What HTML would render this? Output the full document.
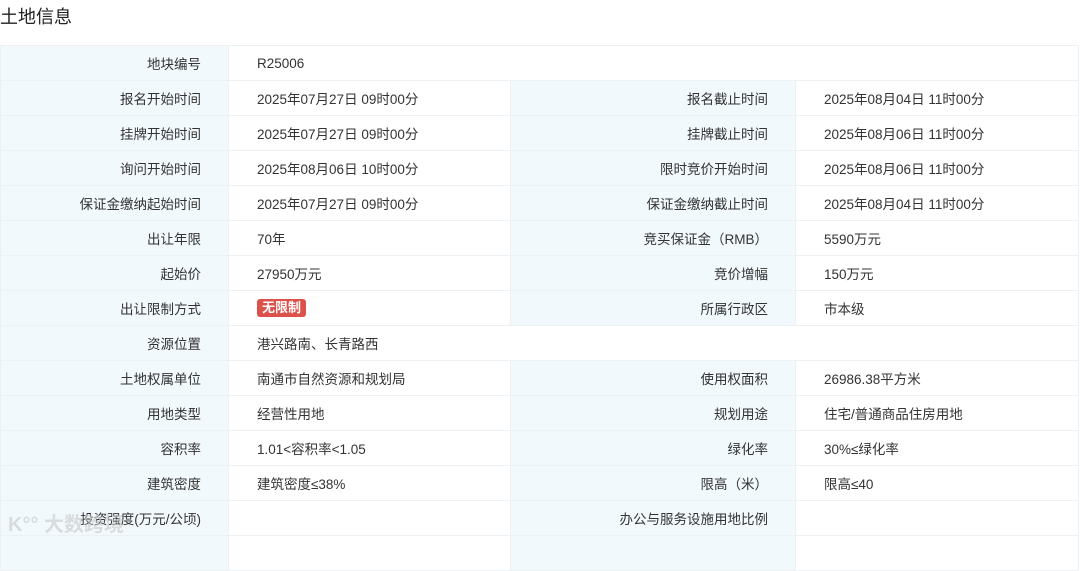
<!DOCTYPE html>
<html><head><meta charset="utf-8"><style>
body{margin:0;background:#fff;font-family:"Liberation Sans","Noto Sans CJK SC",sans-serif;color:#333;width:1080px;height:541px;overflow:hidden;position:relative}
h1{position:absolute;left:0;top:3px;margin:0;font-size:18px;font-weight:normal;color:#222}
table{position:absolute;left:0;top:45px;border-collapse:collapse;width:1078px;table-layout:fixed;font-size:13.5px}
td{height:34px;border:1px solid #edf1f4;padding:0;white-space:nowrap}
td.l{background:#f2f9fd;text-align:right;padding-right:27px;color:#333}
td.v{padding-left:28px}
.b{display:inline-block;background:#dc5149;color:#fff;font-weight:bold;font-size:13px;padding:0 5px;line-height:18px;border-radius:3px}
.wm{position:absolute;left:8px;top:508px;color:rgba(200,200,200,.6);font-size:20px;font-weight:bold}
</style></head><body>
<h1>土地信息</h1>
<table>
<colgroup><col style="width:228px"><col style="width:282px"><col style="width:285px"><col style="width:283px"></colgroup>
<tr><td class="l">地块编号</td><td class="v" colspan="3">R25006</td></tr>
<tr><td class="l">报名开始时间</td><td class="v">2025年07月27日 09时00分</td><td class="l">报名截止时间</td><td class="v">2025年08月04日 11时00分</td></tr>
<tr><td class="l">挂牌开始时间</td><td class="v">2025年07月27日 09时00分</td><td class="l">挂牌截止时间</td><td class="v">2025年08月06日 11时00分</td></tr>
<tr><td class="l">询问开始时间</td><td class="v">2025年08月06日 10时00分</td><td class="l">限时竞价开始时间</td><td class="v">2025年08月06日 11时00分</td></tr>
<tr><td class="l">保证金缴纳起始时间</td><td class="v">2025年07月27日 09时00分</td><td class="l">保证金缴纳截止时间</td><td class="v">2025年08月04日 11时00分</td></tr>
<tr><td class="l">出让年限</td><td class="v">70年</td><td class="l">竞买保证金（RMB）</td><td class="v">5590万元</td></tr>
<tr><td class="l">起始价</td><td class="v">27950万元</td><td class="l">竞价增幅</td><td class="v">150万元</td></tr>
<tr><td class="l">出让限制方式</td><td class="v"><span class="b">无限制</span></td><td class="l">所属行政区</td><td class="v">市本级</td></tr>
<tr><td class="l">资源位置</td><td class="v" colspan="3">港兴路南、长青路西</td></tr>
<tr><td class="l">土地权属单位</td><td class="v">南通市自然资源和规划局</td><td class="l">使用权面积</td><td class="v">26986.38平方米</td></tr>
<tr><td class="l">用地类型</td><td class="v">经营性用地</td><td class="l">规划用途</td><td class="v">住宅/普通商品住房用地</td></tr>
<tr><td class="l">容积率</td><td class="v">1.01&lt;容积率&lt;1.05</td><td class="l">绿化率</td><td class="v">30%≤绿化率</td></tr>
<tr><td class="l">建筑密度</td><td class="v">建筑密度≤38%</td><td class="l">限高（米）</td><td class="v">限高≤40</td></tr>
<tr><td class="l">投资强度(万元/公顷)</td><td class="v"></td><td class="l">办公与服务设施用地比例</td><td class="v"></td></tr>
<tr><td class="l"></td><td class="v"></td><td class="l"></td><td class="v"></td></tr>
</table>
<div class="wm">K°° 大数跨境</div>
</body></html>
